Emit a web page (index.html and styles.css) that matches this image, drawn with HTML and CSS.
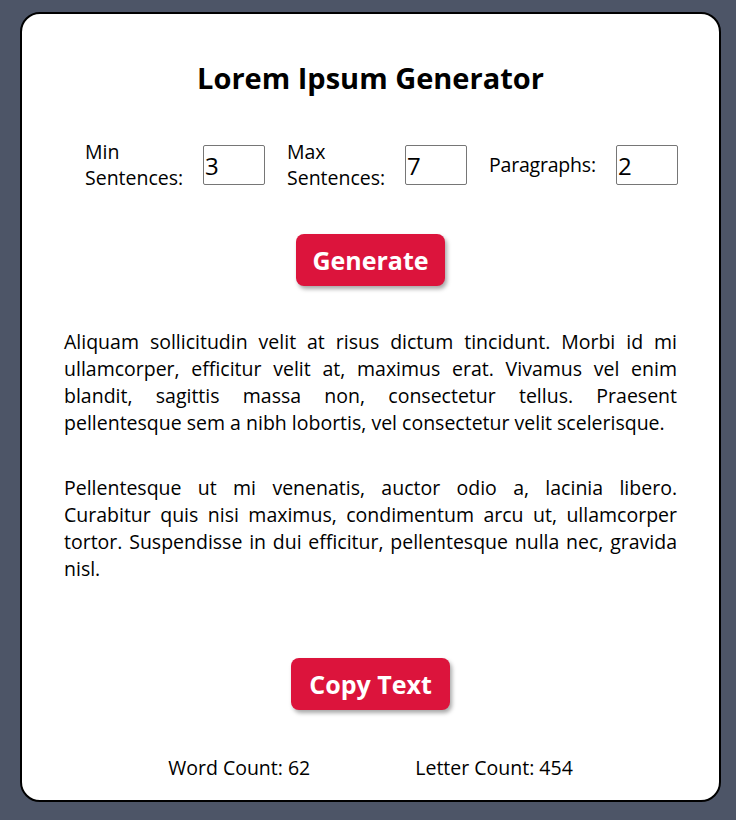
FILE: index.html
```html
<!DOCTYPE html>
<html lang="en">
<head>
<meta charset="utf-8">
<title>Lorem Ipsum Generator</title>
<link rel="stylesheet" href="styles.css">
</head>
<body>
<main class="card">
  <h1 class="title">Lorem Ipsum Generator</h1>
  <div class="controls">
    <label class="ctl-label lbl-min" for="min">Min Sentences:</label>
    <input class="ctl-input" id="min" type="text" value="3">
    <label class="ctl-label lbl-max" for="max">Max Sentences:</label>
    <input class="ctl-input" id="max" type="text" value="7">
    <label class="ctl-label lbl-par" for="par">Paragraphs:</label>
    <input class="ctl-input" id="par" type="text" value="2">
  </div>
  <div class="btn-row"><button class="btn btn-generate">Generate</button></div>
  <div class="output">
    <p class="para">Aliquam sollicitudin velit at risus dictum tincidunt. Morbi id mi ullamcorper, efficitur velit at, maximus erat. Vivamus vel enim blandit, sagittis massa non, consectetur tellus. Praesent pellentesque sem a nibh lobortis, vel consectetur velit scelerisque.</p>
    <p class="para">Pellentesque ut mi venenatis, auctor odio a, lacinia libero. Curabitur quis nisi maximus, condimentum arcu ut, ullamcorper tortor. Suspendisse in dui efficitur, pellentesque nulla nec, gravida nisl.</p>
  </div>
  <div class="btn-row copy-row"><button class="btn btn-copy">Copy Text</button></div>
  <div class="counts">
    <span class="count">Word Count: 62</span>
    <span class="count">Letter Count: 454</span>
  </div>
</main>
</body>
</html>
```
FILE: styles.css
```css
html, body {
  margin: 0;
  padding: 0;
  background: #4d5567;
}
body {
  font-family: "Open Sans", "Noto Sans", sans-serif;
  font-size: 19.5px;
  line-height: 27px;
  color: #000;
  padding-top: 12px;
  min-height: 820px;
  box-sizing: border-box;
}
.card {
  box-sizing: border-box;
  width: 701px;
  height: 790px;
  margin-left: 20px;
  background: #fff;
  border: 2px solid #000;
  border-radius: 20px;
  padding: 44px 42px 0;
  display: flex;
  flex-direction: column;
}
.title {
  margin: 0;
  font-size: 29px;
  line-height: 40px;
  font-weight: 700;
  text-align: center;
}
.controls {
  margin-top: 41px;
  display: flex;
  align-items: center;
  padding-left: 21px;
}
.ctl-label {
  display: block;
  line-height: 26px;
  white-space: normal;
}
.lbl-min { width: 98px; margin-right: 20px; }
.lbl-max { width: 98px; margin-left: 22px; margin-right: 20px; }
.lbl-par { width: 106px; white-space: nowrap; margin-left: 22px; margin-right: 21px; letter-spacing: -0.2px; }
.ctl-input {
  box-sizing: border-box;
  width: 62px;
  height: 40px;
  border: 1px solid #767676;
  border-radius: 2px;
  padding: 0 1px;
  font-family: "Open Sans", "Noto Sans", sans-serif;
  font-size: 24px;
  color: #000;
  background: #fff;
}
.btn-row {
  display: flex;
  justify-content: center;
  margin-top: 43px;
}
.btn {
  box-sizing: border-box;
  height: 52px;
  border: none;
  border-radius: 8px;
  background: #dc143c;
  color: #fff;
  font-family: "Open Sans", "Noto Sans", sans-serif;
  font-size: 25px;
  font-weight: 700;
  box-shadow: 2px 3px 4px rgba(0, 0, 0, 0.35);
  padding: 0;
}
.btn-generate { width: 149px; }
.btn-copy { width: 159px; }
.output {
  margin-top: 42px;
}
.para {
  margin: 0;
  text-align: justify;
}
.para + .para {
  margin-top: 38px;
}
.copy-row {
  margin-top: 76px;
}
.counts {
  margin-top: 44px;
  display: flex;
  justify-content: center;
  gap: 105px;
}
```
